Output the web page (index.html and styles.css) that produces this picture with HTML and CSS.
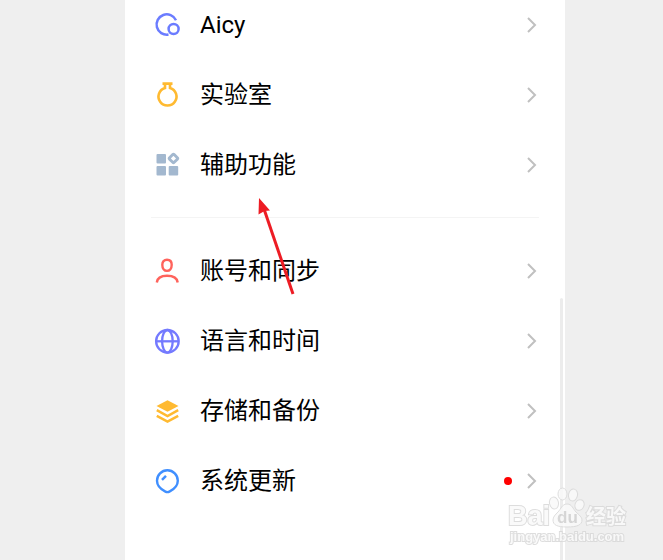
FILE: index.html
```
<!DOCTYPE html>
<html lang="zh-CN">
<head>
  <meta charset="UTF-8" />
  <meta name="viewport" content="width=device-width, initial-scale=1.0" />
  <title>设置</title>
  <link rel="stylesheet" href="styles.css">
</head>
<body>
  <main class="panel">
    <nav class="group">
      <a class="row" href="#aicy">
        <svg class="icon" viewBox="0 0 26 26" fill="none" stroke="#6b7cff" stroke-width="2.5">
          <path d="M22 8.2A10.2 10.2 0 1 0 14.5 22.6" />
          <circle cx="19.6" cy="17" r="5" />
        </svg>
        <span class="label">Aicy</span>
        <svg class="chevron" viewBox="0 0 10 16"><path d="M1 1l7 7-7 7" /></svg>
      </a>
      <a class="row" href="#lab">
        <svg class="icon" viewBox="0 0 26 26" fill="none" stroke="#ffba31" stroke-width="2.6">
          <path d="M8.5 1.6h10M11 1.6v4.3a9 9 0 1 0 5 0V1.6" />
        </svg>
        <span class="label">实验室</span>
        <svg class="chevron" viewBox="0 0 10 16"><path d="M1 1l7 7-7 7" /></svg>
      </a>
      <a class="row" href="#accessibility">
        <svg class="icon" viewBox="0 0 26 26" fill="#a3b8cf">
          <rect x="2.5" y="2" width="9.5" height="9.5" rx="1" />
          <rect x="2.5" y="14" width="9.5" height="9.5" rx="1" />
          <rect x="14.7" y="14" width="9.5" height="9.5" rx="1" />
          <rect x="16.2" y="3.2" width="6.5" height="6.5" rx="1" transform="rotate(45 19.45 6.45)" fill="none" stroke="#a3b8cf" stroke-width="2.9" />
        </svg>
        <span class="label">辅助功能</span>
        <svg class="chevron" viewBox="0 0 10 16"><path d="M1 1l7 7-7 7" /></svg>
      </a>
    </nav>

    <hr class="divider">

    <nav class="group">
      <a class="row" href="#account">
        <svg class="icon" viewBox="0 0 26 26" fill="none" stroke="#ff635c" stroke-width="2.4">
          <path d="M13 1.7c3 0 4.7 2.1 4.7 5.1 0 3.6-1.9 6.1-4.7 6.1s-4.7-2.5-4.7-6.1c0-3 1.7-5.1 4.7-5.1zM2.8 24.5C3.3 20.2 7 17.8 13 17.8S23.2 20.2 23.7 24.5" />
        </svg>
        <span class="label">账号和同步</span>
        <svg class="chevron" viewBox="0 0 10 16"><path d="M1 1l7 7-7 7" /></svg>
      </a>
      <a class="row" href="#language">
        <svg class="icon" viewBox="0 0 26 26" fill="none" stroke="#747aff" stroke-width="2.3">
          <circle cx="13.4" cy="13.3" r="11.3" />
          <ellipse cx="13.4" cy="13.3" rx="5.3" ry="11.3" />
          <path d="M2 13.3h23" />
        </svg>
        <span class="label">语言和时间</span>
        <svg class="chevron" viewBox="0 0 10 16"><path d="M1 1l7 7-7 7" /></svg>
      </a>
      <a class="row" href="#storage">
        <svg class="icon" viewBox="0 0 26 26">
          <path fill="#ffba31" d="M13.5 2.2L24.5 8 13.5 13.8 2.5 8z" />
          <path fill="none" stroke="#ffba31" stroke-width="2.5" d="M2.8 12.2l10.7 5.8 10.7-5.8M2.8 17.9l10.7 5.8 10.7-5.8" />
        </svg>
        <span class="label">存储和备份</span>
        <svg class="chevron" viewBox="0 0 10 16"><path d="M1 1l7 7-7 7" /></svg>
      </a>
      <a class="row" href="#update">
        <svg class="icon" viewBox="0 0 26 26" fill="none" stroke="#408fff" stroke-width="2.4">
          <path d="M13.4 2.3a10.4 10.4 0 0 1 10.4 10.4c0 5-3.3 8.3-8.4 10.9q-2 1-4 0C6.3 21 3 17.7 3 12.7A10.4 10.4 0 0 1 13.4 2.3z" />
          <path d="M8 11.8l4-4" />
        </svg>
        <span class="label">系统更新</span>
        <span class="dot"></span>
        <svg class="chevron" viewBox="0 0 10 16"><path d="M1 1l7 7-7 7" /></svg>
      </a>
    </nav>

    <div class="scrollbar"></div>

    <!-- arrow pointing at 辅助功能 -->
    <svg class="arrow" viewBox="0 0 40 100">
      <path d="M6 11L35 96" stroke="#ed1c24" stroke-width="3" />
      <path d="M1 0l11 12.5-5.5.5-6 3.5z" fill="#ed1c24" />
    </svg>

    <svg class="watermark" viewBox="0 0 124 62">
      <text class="mark-name" x="1" y="39">Bai</text>
      <g transform="translate(-3 -2)">
        <ellipse cx="50" cy="19" rx="4.5" ry="6" transform="rotate(-12 50 19)" />
        <ellipse cx="58.5" cy="10" rx="4.5" ry="6" />
        <ellipse cx="69" cy="11" rx="4.5" ry="6" transform="rotate(12 69 11)" />
        <ellipse cx="75.5" cy="21" rx="4.5" ry="5.5" transform="rotate(25 75.5 21)" />
        <path d="M63 20c-5 0-6 5-9 8-3 3-5 5-5 8 0 5 4 7 14 7s15-2 15-7c0-3-3-5-6-8-3-3-4-8-9-8z" />
      </g>
      <text class="mark-du" x="50" y="37">du</text>
      <text class="mark-cn" x="79" y="38">经验</text>
      <text class="mark-url" x="3" y="55">jingyan.baidu.com</text>
    </svg>
  </main>
</body>
</html>
```
FILE: styles.css
```
body {
  margin: 0;
  padding: 0 98px 0 125px;
  background-color: #efefef;
  font-family: Roboto, "Noto Sans CJK SC", sans-serif;
}
.panel {
  position: relative;
  box-sizing: border-box;
  min-height: 100vh;
  padding-top: 10px;
  background-color: #fff;
}
.group {
  display: flex;
  flex-direction: column;
  gap: 40px;
  padding: 0 28px 0 29px;
}
.row {
  display: flex;
  align-items: center;
  height: 30px;
  color: #000;
  text-decoration: none;
}
.icon {
  width: 26px;
  height: 26px;
  margin-right: 20px;
}
.label {
  flex: 1;
  font-size: 24px;
  line-height: 30px;
}
.dot {
  width: 8px;
  height: 8px;
  margin-right: 15px;
  border-radius: 50%;
  background-color: #f00;
}
.chevron {
  width: 10px;
  height: 16px;
  fill: none;
  stroke: #c0c0c0;
  stroke-width: 2;
}
.divider {
  height: 1px;
  margin: 37px 26px 38px;
  border: none;
  background-color: #f4f4f4;
}
.scrollbar {
  position: absolute;
  top: 298px;
  right: 2px;
  bottom: 0;
  width: 3px;
  border-radius: 2px 2px 0 0;
  background-color: #ececec;
}
.arrow {
  position: absolute;
  top: 198px;
  left: 133px;
  width: 40px;
  height: 100px;
}
.watermark {
  position: fixed;
  right: 32px;
  bottom: 12px;
  width: 124px;
  height: 62px;
  overflow: visible;
  fill: #fafafa;
  stroke: #d8d8d8;
  stroke-width: 1;
  opacity: 0.85;
  font-family: "Liberation Sans", "Noto Sans CJK SC", sans-serif;
  font-weight: bold;
}
.mark-name {
  font-size: 27px;
  stroke-width: 2;
  paint-order: stroke;
}
.mark-du {
  font-size: 17px;
  fill: #d0d0d0;
  stroke: none;
}
.mark-cn {
  font-size: 20px;
  stroke-width: 2;
  paint-order: stroke;
}
.mark-url {
  font-size: 13px;
  stroke-width: 2;
  paint-order: stroke;
}
```
